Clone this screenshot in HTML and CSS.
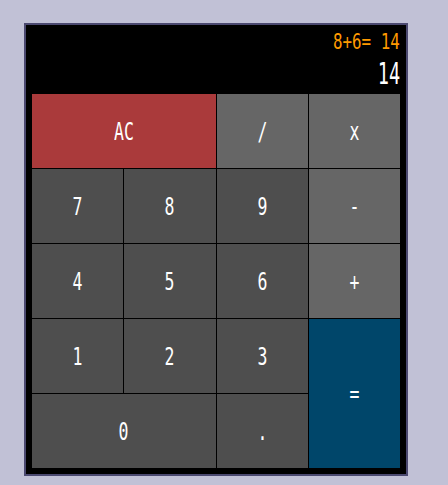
FILE: index.html
```html
<!DOCTYPE html>
<html lang="en">
<head>
<meta charset="utf-8">
<title>Calculator</title>
<link rel="stylesheet" href="styles.css">
</head>
<body>
<div class="calc">
  <div class="display">
    <div class="expr"><span>8+6= 14</span></div>
    <div class="result"><span>14</span></div>
  </div>
  <div class="keys">
    <button class="key clear span2"><span>AC</span></button>
    <button class="key op"><span>/</span></button>
    <button class="key op"><span>x</span></button>
    <button class="key"><span>7</span></button>
    <button class="key"><span>8</span></button>
    <button class="key"><span>9</span></button>
    <button class="key op"><span>-</span></button>
    <button class="key"><span>4</span></button>
    <button class="key"><span>5</span></button>
    <button class="key"><span>6</span></button>
    <button class="key op"><span>+</span></button>
    <button class="key"><span>1</span></button>
    <button class="key"><span>2</span></button>
    <button class="key"><span>3</span></button>
    <button class="key equals rowspan2"><span>=</span></button>
    <button class="key span2"><span>0</span></button>
    <button class="key"><span>.</span></button>
  </div>
</div>
</body>
</html>
```
FILE: styles.css
```css
html, body {
  margin: 0;
  padding: 0;
  background: #c1c1d6;
  height: 100%;
}
body {
  padding: 23px 0 0 24px;
  box-sizing: border-box;
}
.calc {
  box-sizing: border-box;
  width: 384px;
  border: 2px solid #4b4970;
  background: #000;
  padding: 6px;
}
.display {
  height: 63px;
  display: flex;
  flex-direction: column;
  align-items: flex-end;
  font-family: "DejaVu Sans Mono", monospace;
}
.expr {
  color: #ff9a00;
  font-size: 22px;
  line-height: 22px;
  height: 22px;
}
.result {
  color: #ffffff;
  font-size: 30px;
  line-height: 30px;
  height: 30px;
  margin-top: 6px;
}
.expr span, .result span {
  display: inline-block;
  transform-origin: right center;
  white-space: pre;
}
.expr span { transform: scaleX(0.72); }
.result span { transform: scaleX(0.62); }
.keys {
  display: grid;
  grid-template-columns: repeat(4, 1fr);
  grid-template-rows: repeat(5, 74px);
  gap: 1px;
}
.key {
  border: 0;
  margin: 0;
  padding: 0;
  background: #4e4e4e;
  color: #fff;
  font-family: "DejaVu Sans Mono", monospace;
  font-size: 25px;
  line-height: 25px;
  display: flex;
  align-items: center;
  justify-content: center;
}
.key span {
  display: inline-block;
  transform: scaleX(0.66);
}
.op { background: #666666; }
.clear { background: #aa3a3b; }
.equals { background: #00466a; }
.span2 { grid-column: span 2; }
.rowspan2 { grid-row: span 2; }
```
